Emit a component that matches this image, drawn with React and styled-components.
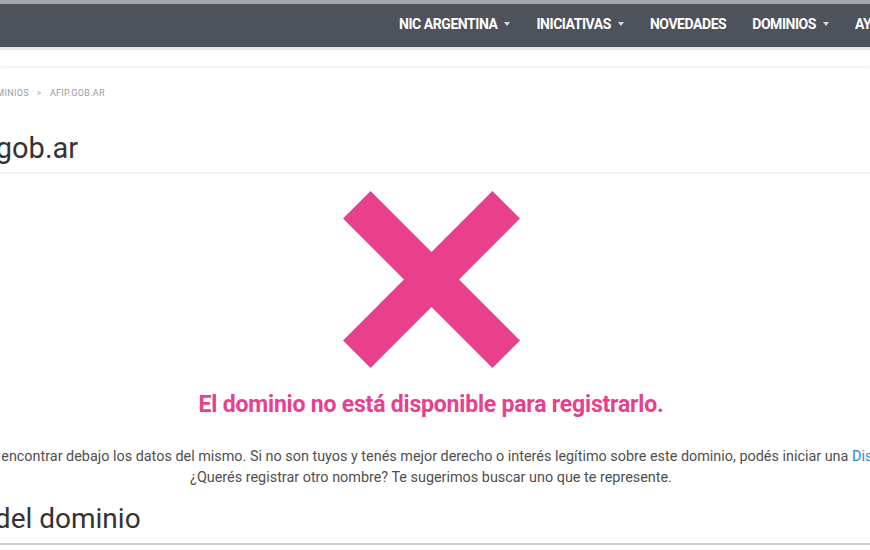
import React from 'react';
import styled, { createGlobalStyle } from 'styled-components';

const GlobalStyle = createGlobalStyle`
    html, body {
        margin: 0;
        padding: 0;
        background: #ffffff;
        overflow: hidden;
    }
    body {
        font-family: Roboto, "Liberation Sans", sans-serif;
        color: #333;
    }
`;

const menu = [
    { label: 'NIC ARGENTINA', dropdown: true },
    { label: 'INICIATIVAS', dropdown: true },
    { label: 'NOVEDADES', dropdown: false },
    { label: 'DOMINIOS', dropdown: true },
    { label: 'AYUDA', dropdown: true },
];

const XMark = () => (
    <svg width="177" height="177" viewBox="0 0 177 177">
        <line x1="13.8" y1="13.8" x2="163.2" y2="163.2" stroke="#e8408d" strokeWidth="39" />
        <line x1="163.2" y1="13.8" x2="13.8" y2="163.2" stroke="#e8408d" strokeWidth="39" />
    </svg>
);

const App = () => {
    return (
        <>
            <GlobalStyle />
            <TopStrip />
            <NavBar>
                <NavMenu>
                    {menu.map((item) => (
                        <NavItem key={item.label} $dropdown={item.dropdown}>
                            {item.label}
                        </NavItem>
                    ))}
                </NavMenu>
            </NavBar>
            <SubBar />
            <Container>
                <Breadcrumb>
                    <Crumb>Inicio</Crumb>
                    <Sep>&gt;</Sep>
                    <Crumb>Dominios</Crumb>
                    <Sep>&gt;</Sep>
                    <Crumb>afip.gob.ar</Crumb>
                </Breadcrumb>
                <Title>afip.gob.ar</Title>
            </Container>
            <Divider />
            <Container>
                <Result>
                    <XMark />
                    <ResultTitle>El dominio no está disponible para registrarlo.</ResultTitle>
                    <ResultText>
                        <Line>
                            Podés encontrar debajo los datos del mismo. Si no son tuyos y tenés mejor derecho o
                            interés legítimo sobre este dominio, podés iniciar una <Link>Disputa</Link>.
                        </Line>
                        <Line>¿Querés registrar otro nombre? Te sugerimos buscar uno que te represente.</Line>
                    </ResultText>
                </Result>
                <SectionTitle>Datos del dominio</SectionTitle>
            </Container>
            <SectionRule />
        </>
    );
};

export default App;

const TopStrip = styled.div`
    height: 4px;
    background: #a4a6aa;
`;

const NavBar = styled.nav`
    height: 43px;
    background: #4e525a;
    display: flex;
    align-items: center;
    padding-bottom: 3px;
    box-sizing: border-box;
    overflow: hidden;
`;

const NavMenu = styled.ul`
    display: flex;
    list-style: none;
    margin: 0 0 0 386px;
    padding: 0;
    white-space: nowrap;
`;

const NavItem = styled.li`
    padding: 0 13px;
    color: #ffffff;
    font-family: Roboto, "Liberation Sans", sans-serif;
    font-weight: 700;
    font-size: 14px;
    letter-spacing: -0.45px;
    display: flex;
    align-items: center;

    &::after {
        content: '';
        display: ${(p) => (p.$dropdown ? 'inline-block' : 'none')};
        margin-left: 7px;
        border-left: 3px solid transparent;
        border-right: 3px solid transparent;
        border-top: 4px solid #d8d9dc;
    }
`;

const SubBar = styled.div`
    height: 16px;
    border-top: 3px solid #e7e8ea;
    background: #ffffff;
    box-shadow: 0 2px 2px rgba(0, 0, 0, 0.06);
`;

const Container = styled.div`
    width: 982px;
    margin-left: -60px;
`;

const Breadcrumb = styled.div`
    display: flex;
    align-items: center;
    gap: 8px;
    margin-top: 22px;
    margin-left: -5px;
    font-size: 9px;
    color: #9b9b9b;
    text-transform: uppercase;
    letter-spacing: 0.3px;
`;

const Crumb = styled.span``;

const Sep = styled.span`
    color: #b0b0b0;
`;

const Title = styled.h1`
    margin: 33px 0 0;
    padding-bottom: 7px;
    font-size: 29px;
    font-weight: 400;
    line-height: 34px;
    color: #333;
`;

const Divider = styled.div`
    height: 2px;
    background: #f1f1f1;
`;

const Result = styled.div`
    display: flex;
    flex-direction: column;
    align-items: center;
    padding-top: 17px;
`;

const ResultTitle = styled.h2`
    margin: 23px 0 0;
    font-size: 23px;
    line-height: 28px;
    font-weight: 700;
    color: #e8408d;
    letter-spacing: -0.2px;
`;

const ResultText = styled.div`
    margin-top: 27px;
    text-align: center;
    font-size: 14.4px;
    line-height: 21px;
    color: #4f4f4f;
`;

const Line = styled.div`
    white-space: nowrap;
`;

const Link = styled.a`
    color: #2a8ad0;
    text-decoration: none;
`;

const SectionTitle = styled.h3`
    margin: 14px 0 0 -25px;
    font-size: 28px;
    font-weight: 400;
    line-height: 34px;
    color: #333;
`;

const SectionRule = styled.div`
    margin-top: 7px;
    height: 2px;
    background: #d0d0d0;
`;
